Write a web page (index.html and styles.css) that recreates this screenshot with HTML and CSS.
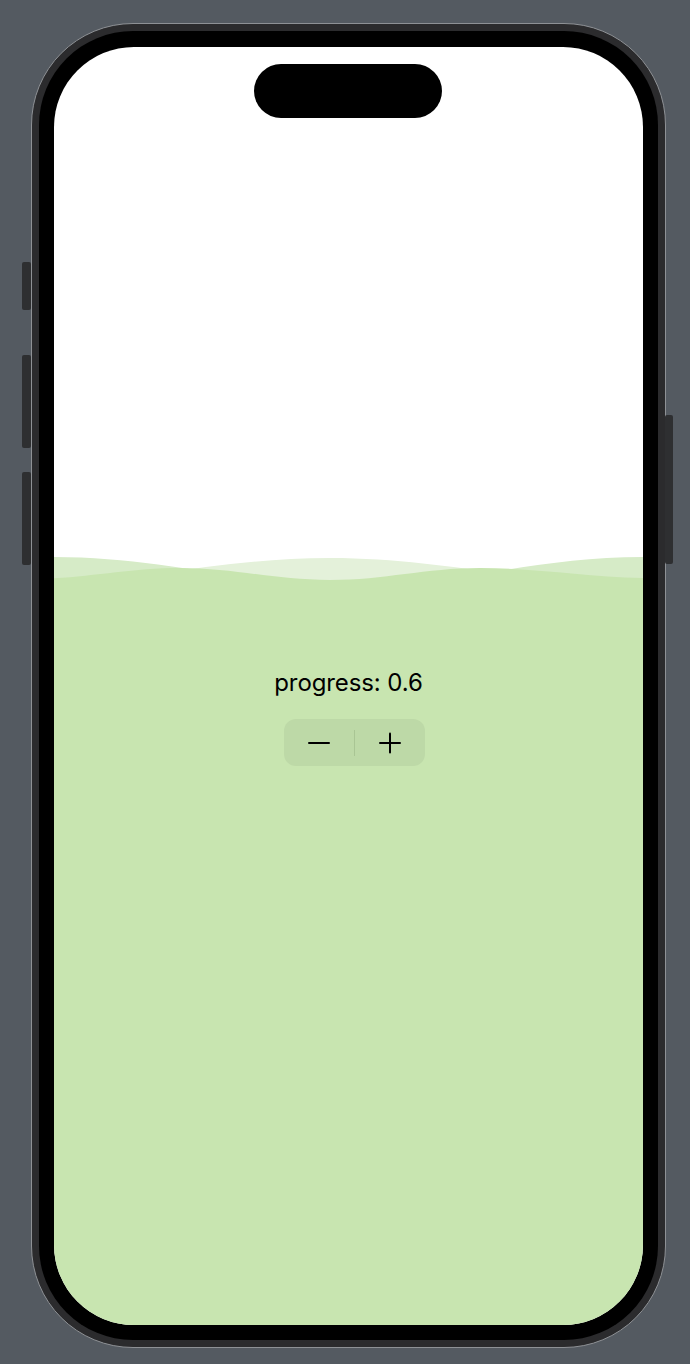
FILE: index.html
```html
<!DOCTYPE html>
<html lang="en">
<head>
<meta charset="utf-8">
<title>Wave progress</title>
<link rel="stylesheet" href="styles.css">
</head>
<body>
<div class="phone">
  <span class="side-btn btn-action"></span>
  <span class="side-btn btn-vol-up"></span>
  <span class="side-btn btn-vol-down"></span>
  <span class="side-btn btn-power"></span>
  <div class="bezel">
    <div class="screen">
      <div class="island"></div>
      <div class="sky"></div>
      <svg class="wave" width="589" height="34" viewBox="0 0 589 34" preserveAspectRatio="none">
        <path class="wave-light" d="M-24 31 C85 31 167 6 276 6 C385 6 467 31 576 31 L589 31 L589 34 L0 34 Z"/>
        <path class="wave-mid" d="M0 5 C109 5 191 33 300 33 C407 33 480 5 589 5 L589 34 L0 34 Z"/>
        <path class="wave-front" d="M-24 27 C31 27 71 16 126 16 C181 16 221 28 276 28 C331 28 371 16 426 16 C489 16 536 26 600 26 L600 34 L0 34 Z"/>
      </svg>
      <div class="water">
        <p class="label">progress: 0.6</p>
        <div class="stepper">
          <button class="step-btn" type="button" aria-label="Decrement">
            <svg width="22" height="22" viewBox="0 0 22 22"><line x1="1" y1="11" x2="21" y2="11"/></svg>
          </button>
          <span class="divider"></span>
          <button class="step-btn" type="button" aria-label="Increment">
            <svg width="22" height="22" viewBox="0 0 22 22"><line x1="1" y1="11" x2="21" y2="11"/><line x1="11" y1="1.5" x2="11" y2="20.5"/></svg>
          </button>
        </div>
      </div>
    </div>
  </div>
</div>
</body>
</html>
```

FILE: styles.css
```css
html, body {
  margin: 0;
  padding: 0;
}

body {
  background: #545a61;
  width: 690px;
  height: 1364px;
  overflow: hidden;
  padding: 23px 0 0 31px;
  box-sizing: border-box;
  font-family: Inter, "Noto Sans", "Liberation Sans", sans-serif;
}

.phone {
  position: relative;
  width: 635px;
  box-sizing: border-box;
  border: 1px solid #8e9195;
  border-radius: 102px;
  background: #2b2b2d;
  padding: 7px;
}

.side-btn {
  position: absolute;
  background: #2e2f31;
  border-radius: 2px;
}

.btn-action { left: -10px; top: 238px; width: 9px; height: 48px; }
.btn-vol-up { left: -10px; top: 331px; width: 9px; height: 93px; }
.btn-vol-down { left: -10px; top: 448px; width: 9px; height: 93px; }
.btn-power { right: -8px; top: 391px; width: 8px; height: 149px; }

.bezel {
  background: #000;
  border-radius: 94px;
  padding: 16px 15px 15px 15px;
}

.screen {
  position: relative;
  width: 589px;
  height: 1278px;
  border-radius: 80px;
  overflow: hidden;
  background: #fff;
  display: flex;
  flex-direction: column;
}

.island {
  position: absolute;
  left: 200px;
  top: 17px;
  width: 188px;
  height: 54px;
  border-radius: 27px;
  background: #000;
}

.sky {
  height: 505px;
  flex: none;
}

.wave {
  display: block;
  flex: none;
}

.wave-light { fill: #e4f1da; }
.wave-mid { fill: #d6ebc7; }
.wave-front { fill: #c8e5b0; }

.water {
  flex: 1;
  background: #c8e5b0;
  margin-top: -1px;
  padding-top: 83px;
  display: flex;
  flex-direction: column;
  align-items: center;
}

.label {
  margin: 0;
  font-size: 24px;
  line-height: 30px;
  color: #000;
  letter-spacing: -0.1px;
}

.stepper {
  margin-top: 21px;
  margin-left: 12px;
  width: 141px;
  height: 47px;
  border-radius: 12px;
  background: #bdd9a7;
  display: flex;
  align-items: center;
}

.step-btn {
  flex: 1;
  height: 100%;
  border: 0;
  background: transparent;
  padding: 0;
  display: flex;
  align-items: center;
  justify-content: center;
}

.step-btn svg line {
  stroke: #000;
  stroke-width: 2;
  stroke-linecap: round;
}

.divider {
  width: 1px;
  height: 26px;
  background: #a9c594;
  flex: none;
}
```
